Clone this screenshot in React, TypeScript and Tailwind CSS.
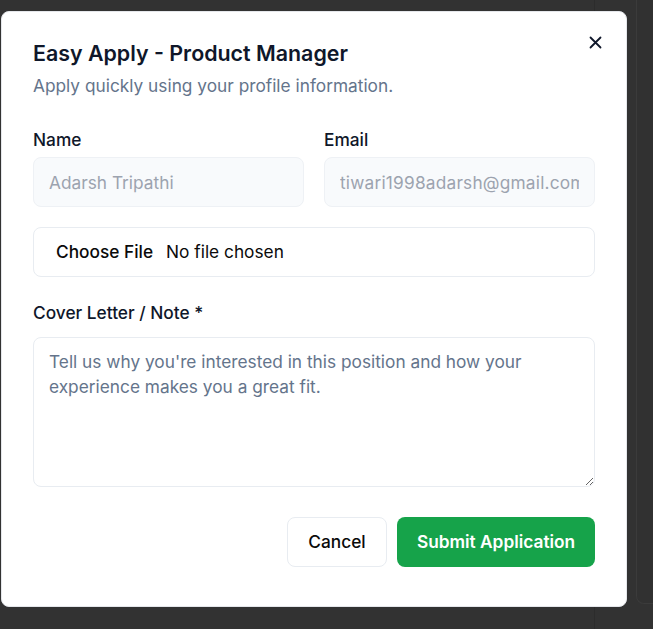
import React from "react";

export default function App() {
  return (
    <div
      className="relative w-[653px] h-[629px] overflow-hidden bg-[#323232]"
      style={{ fontFamily: "Inter, 'Noto Sans', sans-serif" }}
    >
      {/* background page hints */}
      <div className="absolute left-[594px] top-0 h-full w-px bg-[#2c2c2c]" />
      <div className="absolute left-[636px] top-[-10px] w-[40px] h-[614px] rounded-bl-lg border-l border-b border-[#3b3b3b] bg-[#313131]" />

      <div className="absolute left-[1px] top-[11px] w-[626px] h-[596px] rounded-lg bg-white border border-[#e5e7eb] px-[31px] pt-[27px] flex flex-col">
        <button className="absolute right-[23px] top-[22px] w-[16px] h-[16px] flex items-center justify-center text-[#0f172a]">
          <svg width="13" height="13" viewBox="0 0 13 13" fill="none">
            <path d="M1.5 1.5L11.5 11.5M11.5 1.5L1.5 11.5" stroke="currentColor" strokeWidth="1.8" strokeLinecap="round" />
          </svg>
        </button>
        <h2 className="text-[21.4px] leading-[28px] font-semibold text-[#0f172a]">
          Easy Apply - Product Manager
        </h2>
        <p className="mt-[7px] text-[17.3px] leading-[24px] text-[#64748b]">
          Apply quickly using your profile information.
        </p>

        <div className="mt-[30px] grid grid-cols-2 gap-x-[20px]">
          <div className="flex flex-col">
            <label className="text-[17.3px] leading-[24px] font-medium text-[#0f172a]">Name</label>
            <input
              readOnly
              value="Adarsh Tripathi"
              className="mt-[5px] h-[50px] w-full rounded-lg border border-[#eef1f5] bg-[#f8fafc] px-[15px] text-[17.3px] text-[#9ca3af] outline-none"
            />
          </div>
          <div className="flex flex-col">
            <label className="text-[17.3px] leading-[24px] font-medium text-[#0f172a]">Email</label>
            <input
              readOnly
              value="tiwari1998adarsh@gmail.com"
              className="mt-[5px] h-[50px] w-full rounded-lg border border-[#eef1f5] bg-[#f8fafc] px-[15px] text-[17.3px] tracking-[0.2px] text-[#9ca3af] outline-none"
            />
          </div>
        </div>

        <div className="mt-[20px] h-[50px] w-full rounded-lg border border-[#e8ecf1] bg-white flex items-center pl-[22px] text-[17.3px] text-[#0a0a0a]">
          <span className="font-medium">Choose File</span>
          <span className="ml-[13px]">No file chosen</span>
        </div>

        <label className="mt-[24px] text-[17.3px] leading-[24px] font-medium text-[#0f172a]">
          Cover Letter / Note *
        </label>
        <textarea
          placeholder="Tell us why you're interested in this position and how your experience makes you a great fit."
          className="mt-[12px] h-[150px] w-full rounded-lg border border-[#e8ecf1] bg-white px-[15px] pt-[11px] text-[17.3px] leading-[25px] text-[#0f172a] placeholder:text-[#64748b] outline-none"
        />

        <div className="mt-[30px] flex justify-end gap-[10px]">
          <button className="h-[50px] w-[100px] rounded-lg border border-[#e8ecf1] bg-white text-[17.3px] font-medium text-[#0a0a0a]">
            Cancel
          </button>
          <button className="h-[50px] w-[198px] rounded-lg bg-[#16a34a] text-[17.3px] font-semibold text-white">
            Submit Application
          </button>
        </div>
      </div>
    </div>
  );
}
